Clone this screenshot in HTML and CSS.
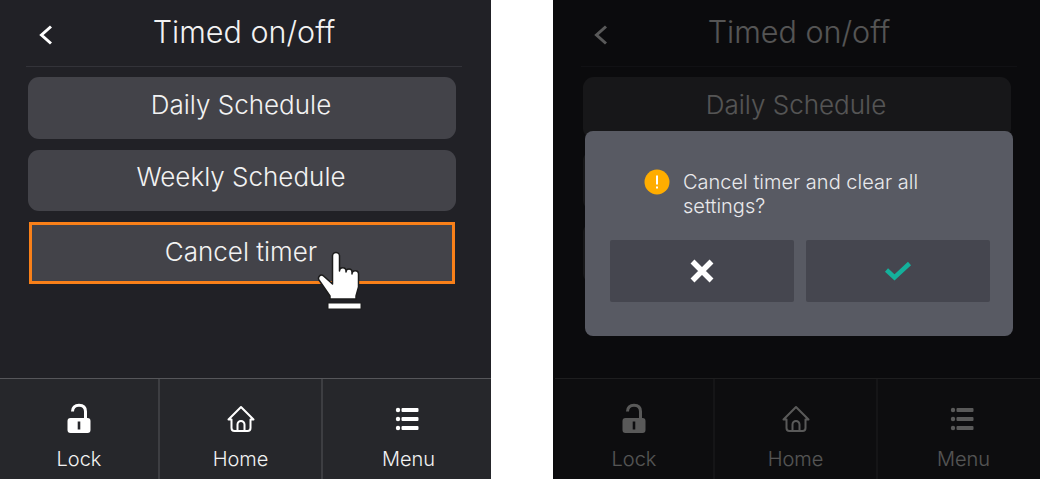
FILE: index.html
```html
<!DOCTYPE html>
<html lang="en">

<head>
    <meta charset="UTF-8">
    <title>Timed on/off</title>
    <link rel="stylesheet" href="styles.css">
</head>

<body>
    <!-- Shared icons -->
    <svg class="icon-defs" width="0" height="0">
        <symbol id="icon-back" viewBox="0 0 18 24">
            <path d="M15 3.500L5.500 12L15 20.500" fill="none" stroke="currentColor" stroke-width="3" />
        </symbol>
        <symbol id="icon-lock" viewBox="0 0 30 32">
            <path d="M8.500 8.500C8.500 4.500 11 2.300 15 2.300C19 2.300 21.500 4.500 21.500 8.500V16" fill="none" stroke="currentColor" stroke-width="3" />
            <path fill-rule="evenodd" fill="currentColor" d="M6.500 15H23.500A3 3 0 0 1 26.500 18V27A3 3 0 0 1 23.500 30H6.500A3 3 0 0 1 3.500 27V18A3 3 0 0 1 6.500 15ZM13.700 18.500V26.500H16.300V18.500Z" />
        </symbol>
        <symbol id="icon-home" viewBox="0 0 30 30">
            <path d="M2.500 15.500L15 3L27.500 15.500H24.500V24A3 3 0 0 1 21.500 27H8.500A3 3 0 0 1 5.500 24V15.500Z" fill="none" stroke="currentColor" stroke-width="2" stroke-linejoin="round" />
            <path d="M11.500 27V20.500A3.500 3.500 0 0 1 18.500 20.500V27" fill="none" stroke="currentColor" stroke-width="2" />
        </symbol>
        <symbol id="icon-menu" viewBox="0 0 30 30">
            <g fill="currentColor">
                <circle cx="6" cy="6" r="2.200" />
                <circle cx="6" cy="15" r="2.200" />
                <circle cx="6" cy="24" r="2.200" />
                <rect x="9.500" y="4" width="17" height="4" rx="1" />
                <rect x="9.500" y="13" width="17" height="4" rx="1" />
                <rect x="9.500" y="22" width="17" height="4" rx="1" />
            </g>
        </symbol>
    </svg>

    <div class="page">
        <!-- Timer screen -->
        <div class="screen">
            <div class="header">
                <svg class="back-icon"><use href="#icon-back"></use></svg>
                <span class="title">Timed on/off</span>
            </div>

            <div class="list">
                <div class="list-btn">Daily Schedule</div>
                <div class="list-btn">Weekly Schedule</div>
                <div class="list-btn list-btn-active">Cancel timer</div>
            </div>

            <div class="nav">
                <div class="nav-item nav-lock">
                    <svg class="nav-icon"><use href="#icon-lock"></use></svg>
                    Lock
                </div>
                <div class="nav-item nav-home">
                    <svg class="nav-icon"><use href="#icon-home"></use></svg>
                    Home
                </div>
                <div class="nav-item nav-menu">
                    <svg class="nav-icon"><use href="#icon-menu"></use></svg>
                    Menu
                </div>
            </div>

            <!-- Pointer hand over the active row -->
            <svg class="hand" width="50" height="62" viewBox="0 0 50 62">
                <path d="M17.500 6a3.500 3.500 0 0 1 7 0V21a3.200 3.200 0 0 1 6.500 0V22a3 3 0 0 1 6 0V24a3.200 3.200 0 0 1 6.500 0V37L41 46V49H15V46L4 30C2.500 27.500 5 24 8 25.500L17.500 34Z" fill="#fff" stroke="#1c1c1c" stroke-width="1.500" stroke-linejoin="round" />
                <rect x="13" y="53" width="33" height="6" fill="#fff" stroke="#1c1c1c" stroke-width="1" />
            </svg>
        </div>

        <!-- Same screen with the confirm dialog open -->
        <div class="screen-wrap">
            <div class="screen">
                <div class="header">
                    <svg class="back-icon"><use href="#icon-back"></use></svg>
                    <span class="title">Timed on/off</span>
                </div>

                <div class="list">
                    <div class="list-btn">Daily Schedule</div>
                    <div class="list-btn">Weekly Schedule</div>
                    <div class="list-btn">Cancel timer</div>
                </div>

                <div class="nav">
                    <div class="nav-item nav-lock">
                        <svg class="nav-icon"><use href="#icon-lock"></use></svg>
                        Lock
                    </div>
                    <div class="nav-item nav-home">
                        <svg class="nav-icon"><use href="#icon-home"></use></svg>
                        Home
                    </div>
                    <div class="nav-item nav-menu">
                        <svg class="nav-icon"><use href="#icon-menu"></use></svg>
                        Menu
                    </div>
                </div>

                <div class="dim"></div>

                <div class="dialog">
                    <div class="dialog-msg">
                        <svg class="alert-icon" width="26" height="26" viewBox="0 0 26 26">
                            <circle cx="13" cy="13" r="12.500" fill="#ffad00" />
                            <path d="M13 6.500V15.500" stroke="#fff" stroke-width="2" />
                            <rect x="12" y="17.500" width="2" height="2" fill="#fff" />
                        </svg>
                        <p class="dialog-text">Cancel timer and clear all settings?</p>
                    </div>
                    <div class="dialog-actions">
                        <div class="dialog-btn">
                            <svg width="26" height="26" viewBox="0 0 26 26">
                                <path d="M3.500 3.500L22.500 22.500M22.500 3.500L3.500 22.500" stroke="#fff" stroke-width="5.500" />
                            </svg>
                        </div>
                        <div class="dialog-btn">
                            <svg width="28" height="22" viewBox="0 0 28 22">
                                <path d="M2.500 10L10.500 17.500L25.500 3.500" fill="none" stroke="#14b09b" stroke-width="4.500" />
                            </svg>
                        </div>
                    </div>
                </div>
            </div>
        </div>
    </div>
</body>

</html>
```

FILE: styles.css
```css
body {
    margin: 0;
    background-color: #ffffff;
    font-family: Inter, Roboto, sans-serif;
    font-weight: 300;
    overflow: hidden;
}

.icon-defs {
    position: absolute;
}

.page {
    display: flex;
    gap: 62px;
    width: 1040px;
    height: 479px;
    overflow: hidden;
}

/* Phone panel */
.screen {
    position: relative;
    display: flex;
    flex-direction: column;
    flex-shrink: 0;
    width: 491px;
    height: 479px;
    background-color: #212126;
    color: #f2f2f2;
}

.screen-wrap {
    flex-shrink: 0;
    padding-left: 2px;
    background-color: #0b0b0d;
}

.header {
    display: flex;
    align-items: center;
    justify-content: center;
    position: relative;
    box-sizing: border-box;
    height: 67px;
    padding-bottom: 4px;
    margin: 0 29px 0 26px;
    border-bottom: 1px solid #333339;
}

.title {
    font-size: 30.5px;
}

.back-icon {
    position: absolute;
    left: 10px;
    top: 23px;
    width: 18px;
    height: 24px;
    color: #ffffff;
}

.list {
    display: flex;
    flex-direction: column;
    gap: 11px;
    flex: 1;
    padding: 10px 35px 0 28px;
}

.list-btn {
    display: flex;
    align-items: center;
    justify-content: center;
    box-sizing: border-box;
    height: 61.5px;
    padding: 0 2px 7px 0;
    border-radius: 11px;
    background-color: #434349;
    font-size: 26px;
}

.list-btn-active {
    margin: 0 1px;
    padding: 0 2px 2px 0;
    border: 3px solid #f98019;
    border-radius: 0;
}

.hand {
    position: absolute;
    left: 315px;
    top: 250px;
}

/* Bottom bar */
.nav {
    display: flex;
    height: 100px;
    border-top: 1px solid #56565a;
    background-color: #26272b;
}

.nav-item {
    display: flex;
    flex-direction: column;
    align-items: center;
    box-sizing: border-box;
    padding-top: 24px;
    font-size: 20px;
}

.nav-lock {
    width: 160px;
    border-right: 2px solid #3d3e42;
}

.nav-home {
    width: 163px;
    border-right: 2px solid #3d3e42;
}

.nav-menu {
    width: 168px;
    padding-left: 3px;
}

.nav-icon {
    width: 30px;
    height: 32px;
    margin-bottom: 12px;
    color: #ffffff;
}

.nav-menu .nav-icon {
    margin-right: 4px;
}

/* Dialog state */
.dim {
    position: absolute;
    inset: 0;
    background-color: rgba(0, 0, 0, 0.65);
}

.dialog {
    position: absolute;
    left: 30px;
    top: 131px;
    box-sizing: border-box;
    width: 428px;
    height: 205px;
    padding: 0 25px;
    border-radius: 8px;
    background-color: #585a63;
}

.dialog-msg {
    display: flex;
    align-items: flex-start;
    gap: 13px;
    height: 109px;
    padding: 38px 0 0 34px;
    box-sizing: border-box;
}

.alert-icon {
    flex-shrink: 0;
}

.dialog-text {
    margin: 0;
    padding-top: 1px;
    font-size: 20px;
    line-height: 24px;
    color: #e9e9ec;
}

.dialog-actions {
    display: flex;
    gap: 12.5px;
}

.dialog-btn {
    display: flex;
    align-items: center;
    justify-content: center;
    flex-shrink: 0;
    width: 183.5px;
    height: 62px;
    border-radius: 2px;
    background-color: #45464f;
}
```
